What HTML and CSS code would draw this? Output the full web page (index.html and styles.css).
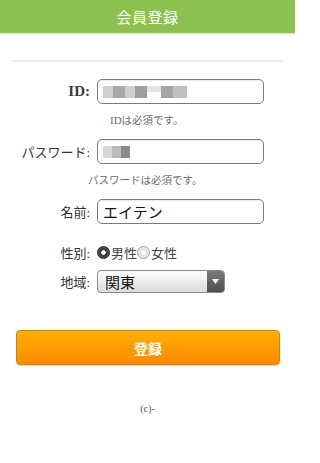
FILE: index.html
```html
<!DOCTYPE html>
<html lang="ja">
<head>
<meta charset="utf-8">
<link rel="stylesheet" href="styles.css">
</head>
<body>
<header class="topbar"><h1 class="title">会員登録</h1></header>
<main class="content">
  <hr class="rule">
  <form class="form">
    <div class="row row-id">
      <label class="label"><span class="latin">ID:</span></label>
      <div class="field text-field">
        <span class="mosaic">
          <i class="m m1"></i><i class="m m2"></i><i class="m m3"></i><i class="m m4"></i><i class="m m5"></i><i class="m m6"></i><i class="m m7"></i>
        </span>
      </div>
    </div>
    <p class="hint hint-id"><span class="latin-s">ID</span>は必須です。</p>
    <div class="row">
      <label class="label">パスワード:</label>
      <div class="field text-field">
        <span class="mosaic">
          <i class="m p1"></i><i class="m p2"></i><i class="m p3"></i>
        </span>
      </div>
    </div>
    <p class="hint hint-pw">パスワードは必須です。</p>
    <div class="row">
      <label class="label">名前:</label>
      <div class="field text-field"><span class="value">エイテン</span></div>
    </div>
    <div class="row row-gender">
      <label class="label">性別:</label>
      <div class="radios">
        <span class="radio checked"></span><span class="radio-text">男性</span>
        <span class="radio"></span><span class="radio-text">女性</span>
      </div>
    </div>
    <div class="row row-area">
      <label class="label">地域:</label>
      <div class="select">
        <span class="select-value">関東</span>
        <span class="select-arrow"><svg width="7" height="5" viewBox="0 0 7 5"><path d="M0 0H7L3.5 5Z" fill="#fff"/></svg></span>
      </div>
    </div>
  </form>
  <button class="submit" type="button">登録</button>
  <footer class="footer">(c)-</footer>
</main>
</body>
</html>
```
FILE: styles.css
```css
* { box-sizing: border-box; }
html, body { margin: 0; padding: 0; background: #fff; }
html { overflow: hidden; }
body {
  font-family: "Liberation Serif", "Noto Sans CJK JP", serif;
  color: #333;
  width: 295px;
}
.topbar {
  height: 34px;
  background: #8cc152;
  border-bottom: 1px solid #d9efc0;
  display: flex;
  align-items: center;
  justify-content: center;
}
.title {
  margin: 0;
  font-size: 15px;
  font-weight: normal;
  color: #fff;
  letter-spacing: 0.5px;
}
.content { padding: 0 12px; }
.rule {
  margin: 26px 0 0;
  border: 0;
  height: 2px;
  background: linear-gradient(#e4e4e4, #f2f2f2);
}
.form { margin-top: 17px; }
.row {
  display: flex;
  align-items: center;
  height: 25px;
}
.label {
  width: 78px;
  text-align: right;
  font-size: 13px;
  color: #333;
  margin-right: 7px;
  white-space: nowrap;
}
.latin { font-size: 15px; font-weight: bold; color: #3a3a3a; }
.latin-s { font-size: 11px; }
.field {
  width: 167px;
  height: 25px;
  border: 1px solid #7a7a7a;
  border-radius: 5px;
  background: #fff;
  box-shadow: inset 0 1px 1px rgba(0,0,0,0.08);
  display: flex;
  align-items: center;
  padding-left: 5px;
}
.mosaic { display: flex; align-items: center; height: 12px; }
.m { display: block; height: 12px; background: #c4c4c4; }
.m1 { width: 10px; background: #d0d0d0; }
.m2 { width: 12px; background: #a9a9a9; }
.m3 { width: 10px; background: #cfcfcf; }
.m4 { width: 12px; background: #9e9e9e; }
.m5 { width: 14px; background: #e3e3e3; height: 6px; align-self: flex-start; }
.m6 { width: 12px; background: #a5a5a5; }
.m7 { width: 14px; background: #bfbfbf; }
.p1 { width: 9px; background: #d6d6d6; }
.p2 { width: 9px; background: #bcbcbc; }
.p3 { width: 9px; background: #8a8a8a; }
.value {
  font-family: "Noto Sans CJK JP", sans-serif;
  font-size: 15px;
  color: #111;
}
.hint {
  margin: 0;
  font-size: 10.5px;
  color: #6a6a6a;
  height: 35px;
  line-height: 33px;
}
.hint-id { padding-left: 98px; }
.hint-pw { padding-left: 76px; }
.row + .row { margin-top: 10px; }
.row-gender { margin-top: 15px !important; height: 26px; }
.row-area { margin-top: 5px !important; height: 23px; }
.radios { display: flex; align-items: center; font-size: 13px; color: #444; }
.radio {
  width: 13px; height: 13px;
  border-radius: 50%;
  border: 1px solid #999;
  background: radial-gradient(circle, #fff 0 2px, #ddd 3px, #f4f4f4 6px);
  margin-right: 1px;
}
.radio.checked {
  border-color: #222;
  background: radial-gradient(circle, #fff 0 2px, #333 2.6px, #555 6px);
}
.radio-text { margin-right: 0; }
.select {
  width: 128px;
  height: 23px;
  border: 1px solid #8a8a8a;
  border-radius: 4px;
  background: linear-gradient(#fdfdfd, #dcdcdc);
  display: flex;
  align-items: center;
  overflow: hidden;
}
.select-value {
  flex: 1;
  padding-left: 7px;
  font-family: "Noto Sans CJK JP", sans-serif;
  font-size: 15px;
  color: #111;
}
.select-arrow {
  width: 17px;
  height: 100%;
  background: linear-gradient(#7a7a7a, #4d4d4d);
  display: flex;
  align-items: center;
  justify-content: center;
}
.submit {
  display: flex;
  align-items: center;
  justify-content: center;
  margin: 37px 0 0 4px;
  width: 264px;
  height: 35px;
  border: 1px solid #c98800;
  border-radius: 4px;
  background: linear-gradient(#ffb000, #ff8a00);
  color: #fff;
  font-family: "Noto Sans CJK JP", sans-serif;
  font-size: 14px;
  font-weight: bold;
  box-shadow: 0 1px 1px rgba(0,0,0,0.15);
}
.footer {
  text-align: center;
  font-size: 10px;
  color: #555;
  margin-top: 38px;
}
```
